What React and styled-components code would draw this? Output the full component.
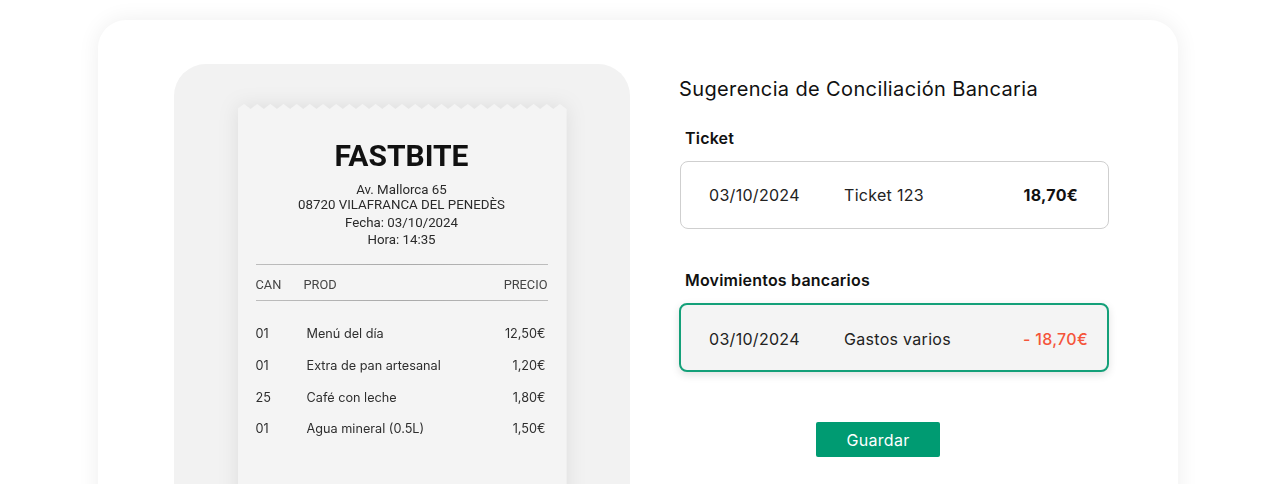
import React from "react";
import styled, { createGlobalStyle } from "styled-components";

const Global = createGlobalStyle`
  html, body { margin: 0; padding: 0; background: #ffffff; overflow: hidden; }
  body { font-family: Inter, "Noto Sans", sans-serif; color: #111; }
  * { box-sizing: border-box; }
`;

const TEETH = 25;
const zigzag = (() => {
  const pts = [];
  const w = 100 / TEETH;
  for (let i = 0; i < TEETH; i++) {
    pts.push(`${(i * w).toFixed(3)}% 5px`);
    pts.push(`${(i * w + w / 2).toFixed(3)}% 0px`);
  }
  pts.push("100% 5px", "100% 100%", "0% 100%");
  return `polygon(${pts.join(", ")})`;
})();

const Page = styled.div`
  padding: 20px 0 0 98px;
  height: 484px;
`;

const Card = styled.div`
  width: 1080px;
  height: 520px;
  background: #fff;
  border-radius: 28px;
  box-shadow: 0 0 22px rgba(0, 0, 0, 0.07);
  padding: 44px 0 0 76px;
  display: flex;
  align-items: flex-start;
`;

const Panel = styled.div`
  width: 456px;
  height: 480px;
  background: #f2f2f2;
  border-radius: 32px;
  padding-top: 40px;
  display: flex;
  justify-content: center;
`;

const ReceiptShadow = styled.div`
  filter: drop-shadow(0 0 10px rgba(0, 0, 0, 0.09));
`;

const Receipt = styled.div`
  width: 329px;
  height: 440px;
  background: #f4f4f4;
  clip-path: ${zigzag};
  padding: 34px 19px 0 18px;
`;

const Brand = styled.div`
  font-family: Roboto, "Liberation Sans", sans-serif;
  font-weight: 700;
  font-size: 30px;
  line-height: 36px;
  text-align: center;
  color: #111;
`;

const InfoBlock = styled.div`
  font-family: Roboto, "Liberation Sans", sans-serif;
  font-size: 13.3px;
  line-height: ${(p) => p.$lh}px;
  margin-top: ${(p) => p.$mt}px;
  text-align: center;
  color: #2a2a2a;
`;

const Rule = styled.div`
  height: 1px;
  background: linear-gradient(90deg, #bdbdbd, #a9a9a9 50%, #bdbdbd);
  margin-top: ${(p) => p.$mt || 0}px;
`;

const HeadRow = styled.div`
  display: flex;
  font-family: Roboto, "Liberation Sans", sans-serif;
  font-size: 12.8px;
  line-height: 16px;
  color: #444;
  padding: 12px 0 7px;
`;

const HeadQty = styled.span`
  width: 48px;
`;

const HeadProd = styled.span`
  flex: 1;
`;

const Items = styled.div`
  margin-top: 17px;
`;

const ItemRow = styled.div`
  display: flex;
  align-items: center;
  height: 31.7px;
  font-family: Inter, "Noto Sans", sans-serif;
  font-size: 12.7px;
  color: #2e2e2e;
  padding-right: 2px;
`;

const Qty = styled.span`
  width: 51px;
`;

const Prod = styled.span`
  flex: 1;
`;

const Right = styled.div`
  width: 430px;
  margin-left: 49px;
  padding-top: 13px;
  display: flex;
  flex-direction: column;
  align-items: flex-start;
`;

const Title = styled.h1`
  margin: 0;
  font-size: 20px;
  font-weight: 400;
  letter-spacing: 0.37px;
  line-height: 24px;
  color: #111;
`;

const Label = styled.h2`
  margin: ${(p) => p.$mt}px 0 13px 6px;
  font-size: 16px;
  font-weight: 600;
  letter-spacing: 0.2px;
  line-height: 20px;
  color: #111;
`;

const Entry = styled.div`
  width: ${(p) => (p.$active ? 430 : 429)}px;
  height: ${(p) => (p.$active ? 69 : 68)}px;
  margin-left: ${(p) => (p.$active ? 0 : 1)}px;
  border: ${(p) => (p.$active ? "2px solid #14a079" : "1px solid #cfcfcf")};
  border-radius: 8px;
  background: ${(p) => (p.$active ? "#f4f4f4" : "#fff")};
  box-shadow: ${(p) => (p.$active ? "0 3px 8px rgba(0,0,0,0.12)" : "none")};
  display: flex;
  align-items: center;
  padding: ${(p) => (p.$active ? "2px" : "0")} ${(p) => p.$pr}px 0 28px;
  font-size: 16px;
  letter-spacing: 0.3px;
  color: #222;
`;

const DateCol = styled.span`
  width: 135px;
`;

const Desc = styled.span`
  flex: 1;
`;

const Amount = styled.span`
  font-weight: ${(p) => (p.$neg ? 500 : 700)};
  color: ${(p) => (p.$neg ? "#f4553b" : "#111")};
`;

const SaveButton = styled.button`
  margin: 50px 0 0 137px;
  width: 124px;
  height: 35px;
  border: none;
  border-radius: 2px;
  background: #009b72;
  color: #fff;
  font-family: Inter, "Noto Sans", sans-serif;
  font-size: 16px;
  letter-spacing: 0.3px;
  cursor: pointer;
`;

const items = [
  ["01", "Menú del día", "12,50€"],
  ["01", "Extra de pan artesanal", "1,20€"],
  ["25", "Café con leche", "1,80€"],
  ["01", "Agua mineral (0.5L)", "1,50€"],
];

export default function App() {
  return (
    <>
      <Global />
      <Page>
        <Card>
          <Panel>
            <ReceiptShadow>
              <Receipt>
                <Brand>FASTBITE</Brand>
                <InfoBlock $lh={15} $mt={8}>
                  <div>Av. Mallorca 65</div>
                  <div>08720 VILAFRANCA DEL PENEDÈS</div>
                </InfoBlock>
                <InfoBlock $lh={17} $mt={2}>
                  <div>Fecha: 03/10/2024</div>
                  <div>Hora: 14:35</div>
                </InfoBlock>
                <Rule $mt={16} />
                <HeadRow>
                  <HeadQty>CAN</HeadQty>
                  <HeadProd>PROD</HeadProd>
                  <span>PRECIO</span>
                </HeadRow>
                <Rule />
                <Items>
                  {items.map(([q, p, pr]) => (
                    <ItemRow key={p}>
                      <Qty>{q}</Qty>
                      <Prod>{p}</Prod>
                      <span>{pr}</span>
                    </ItemRow>
                  ))}
                </Items>
              </Receipt>
            </ReceiptShadow>
          </Panel>
          <Right>
            <Title>Sugerencia de Conciliación Bancaria</Title>
            <Label $mt={27}>Ticket</Label>
            <Entry $pr={30}>
              <DateCol>03/10/2024</DateCol>
              <Desc>Ticket 123</Desc>
              <Amount>18,70€</Amount>
            </Entry>
            <Label $mt={41}>Movimientos bancarios</Label>
            <Entry $active $pr={19}>
              <DateCol>03/10/2024</DateCol>
              <Desc>Gastos varios</Desc>
              <Amount $neg>- 18,70€</Amount>
            </Entry>
            <SaveButton>Guardar</SaveButton>
          </Right>
        </Card>
      </Page>
    </>
  );
}
